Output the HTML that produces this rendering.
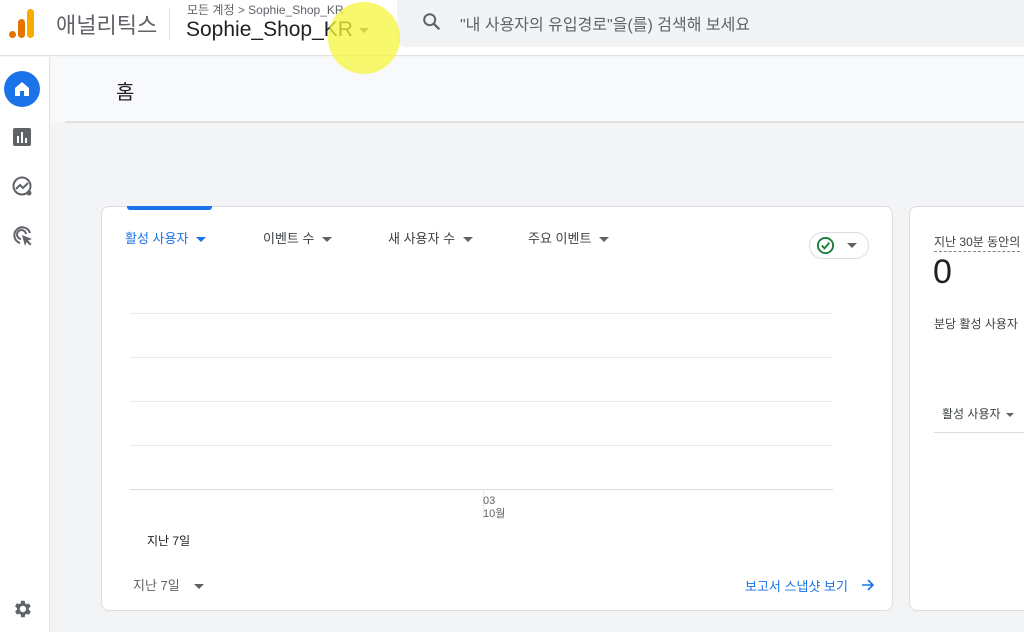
<!DOCTYPE html>
<html><head><meta charset="utf-8"><style>
*{margin:0;padding:0;box-sizing:border-box}
body{width:1024px;height:632px;overflow:hidden;background:#f3f4f6;font-family:"Liberation Sans","Noto Sans CJK KR",sans-serif;position:relative;color:#3c4043}
.a{position:absolute}
.caret{display:inline-block;width:0;height:0;border-left:5px solid transparent;border-right:5px solid transparent;border-top:5px solid #5f6368;vertical-align:middle;margin-left:8px}
</style></head><body>
<div class="a" style="left:0;top:0;width:1024px;height:56px;background:#fff;border-bottom:1px solid #e3e3e3"></div>
<svg class="a" style="left:8px;top:8px" width="30" height="32" viewBox="0 0 30 32">
<rect x="19" y="1" width="7" height="29" rx="3.5" fill="#f9ab00"/>
<rect x="10" y="11" width="7" height="19" rx="3.5" fill="#e37400"/>
<circle cx="4.5" cy="26.5" r="3.5" fill="#e37400"/></svg>
<div class="a" style="left:56px;top:8px;font-size:22px;color:#5f6368">애널리틱스</div>
<div class="a" style="left:169px;top:8px;width:1px;height:32px;background:#e0e0e0"></div>
<div class="a" style="left:187px;top:1px;font-size:12px;color:#5f6368">모든 계정 &gt; Sophie_Shop_KR</div>
<div class="a" style="left:186px;top:18px;font-size:21px;color:#202124">Sophie_Shop_KR<span class="caret" style="margin-left:6px"></span></div>
<div class="a" style="left:397px;top:0;width:627px;height:47px;background:#f1f3f4;border-radius:0 0 0 8px"></div>
<svg class="a" style="left:421px;top:11px" width="22" height="22" viewBox="0 0 24 24"><circle cx="9.5" cy="9.5" r="6" stroke="#5f6368" stroke-width="2.2" fill="none"/><path d="M14 14l6 6" stroke="#5f6368" stroke-width="2.5"/></svg>
<div class="a" style="left:460px;top:11px;font-size:16px;color:#5f6368">"내 사용자의 유입경로"을(를) 검색해 보세요</div>
<div class="a" style="left:0;top:57px;width:50px;height:575px;background:#fff;border-right:1px solid #e3e3e3"></div>
<div class="a" style="left:4px;top:71px;width:36px;height:36px;border-radius:50%;background:#1a73e8"></div>
<svg class="a" style="left:12px;top:79px" width="20" height="20" viewBox="0 0 20 20"><path d="M3 9L10 3l7 6v8h-5v-5H8v5H3z" fill="#fff"/></svg>
<svg class="a" style="left:12px;top:127px" width="20" height="20" viewBox="0 0 20 20"><rect x="1" y="1" width="18" height="18" rx="2" fill="#5f6368"/><rect x="5" y="9" width="2" height="7" fill="#fff"/><rect x="9" y="5" width="2" height="11" fill="#fff"/><rect x="13" y="11" width="2" height="5" fill="#fff"/></svg>
<svg class="a" style="left:11px;top:175px" width="22" height="22" viewBox="0 0 22 22"><circle cx="11" cy="11" r="8.5" stroke="#5f6368" stroke-width="2" fill="none"/><path d="M5 14l4-4 3 3 5-5" stroke="#5f6368" stroke-width="2" fill="none"/><circle cx="18" cy="18" r="2.5" fill="#5f6368"/></svg>
<svg class="a" style="left:11px;top:224px" width="24" height="24" viewBox="0 0 24 24"><path d="M19 9A8 8 0 1 0 9 19" stroke="#5f6368" stroke-width="2" fill="none"/><path d="M15 10a4.5 4.5 0 1 0-5 5" stroke="#5f6368" stroke-width="2" fill="none"/><path d="M11 11l10 4-4 1.5 3.5 3.5-1.5 1.5-3.5-3.5-1.5 4z" fill="#5f6368"/></svg>
<svg class="a" style="left:11px;top:598px" width="22" height="22" viewBox="0 0 24 24"><path fill="#5f6368" d="M19.4 13a7.5 7.5 0 0 0 0-2l2.1-1.6-2-3.5-2.5 1a7 7 0 0 0-1.7-1L15 3h-4l-.4 2.7a7 7 0 0 0-1.700 1l-2.5-1-2 3.5L6.6 11a7.5 7.5 0 0 0 0 2l-2.1 1.6 2 3.5 2.5-1a7 7 0 0 0 1.7 1L11 21h4l.4-2.7a7 7 0 0 0 1.7-1l2.5 1 2-3.5zM13 15.5a3.5 3.5 0 1 1 0-7 3.5 3.5 0 0 1 0 7z"/></svg>
<div class="a" style="left:51px;top:57px;width:973px;height:65px;background:#f8f9fa"></div>
<div class="a" style="left:65px;top:121px;width:959px;height:2px;background:#e0e0e0"></div>
<div class="a" style="left:116px;top:76px;font-size:20px;color:#202124">홈</div>
<div class="a" style="left:328px;top:2px;width:72px;height:72px;border-radius:50%;background:rgba(245,245,60,0.75)"></div>
<div class="a" style="left:101px;top:206px;width:792px;height:405px;background:#fff;border:1px solid #dadce0;border-radius:8px"></div>
<div class="a" style="left:127px;top:206px;width:85px;height:4px;background:#1a73e8;border-radius:0 0 3px 3px"></div>
<div class="a" style="left:125px;top:228px;font-size:13px;color:#1a73e8">활성 사용자<span class="caret" style="border-top-color:#1a73e8"></span></div>
<div class="a" style="left:263px;top:228px;font-size:13px">이벤트 수<span class="caret"></span></div>
<div class="a" style="left:388px;top:228px;font-size:13px">새 사용자 수<span class="caret"></span></div>
<div class="a" style="left:528px;top:228px;font-size:13px">주요 이벤트<span class="caret"></span></div>
<div class="a" style="left:809px;top:232px;width:60px;height:27px;border:1px solid #dadce0;border-radius:14px"></div>
<svg class="a" style="left:816px;top:236px" width="19" height="19" viewBox="0 0 20 20"><circle cx="10" cy="10" r="8" stroke="#188038" stroke-width="2" fill="none"/><path d="M6 10l3 3 5-6" stroke="#188038" stroke-width="2" fill="none"/></svg>
<span class="caret a" style="left:847px;top:243px;margin:0"></span>
<div class="a" style="left:130px;top:313px;width:703px;height:1px;background:#e8eaed"></div>
<div class="a" style="left:130px;top:357px;width:703px;height:1px;background:#e8eaed"></div>
<div class="a" style="left:130px;top:401px;width:703px;height:1px;background:#e8eaed"></div>
<div class="a" style="left:130px;top:445px;width:703px;height:1px;background:#e8eaed"></div>
<div class="a" style="left:130px;top:489px;width:703px;height:1px;background:#dadce0"></div>
<div class="a" style="left:483px;top:489px;width:1px;height:30px;background:#e8eaed"></div>
<div class="a" style="left:483px;top:495px;font-size:11px;line-height:13px;color:#5f6368">03<br>10월</div>
<div class="a" style="left:147px;top:532px;font-size:12px;color:#202124">지난 7일</div>
<div class="a" style="left:133px;top:575px;font-size:13px;color:#5f6368">지난 7일<span class="caret" style="margin-left:14px"></span></div>
<div class="a" style="left:745px;top:576px;font-size:13px;color:#1a73e8">보고서 스냅샷 보기</div>
<svg class="a" style="left:861px;top:578px" width="14" height="14" viewBox="0 0 14 14"><path d="M1 7h11M7 2l5 5-5 5" stroke="#1a73e8" stroke-width="1.6" fill="none"/></svg>
<div class="a" style="left:909px;top:206px;width:130px;height:405px;background:#fff;border:1px solid #dadce0;border-radius:8px"></div>
<div class="a" style="left:934px;top:233px;font-size:12px;color:#3c4043;border-bottom:1px dashed #80868b;padding-bottom:1px;white-space:nowrap">지난 30분 동안의</div>
<div class="a" style="left:933px;top:253px;font-size:34px;color:#202124">0</div>
<div class="a" style="left:934px;top:315px;font-size:12px;white-space:nowrap">분당 활성 사용자</div>
<div class="a" style="left:942px;top:405px;font-size:12px;white-space:nowrap">활성 사용자<span class="caret" style="margin-left:5px;border-width:4px 4px 0"></span></div>
<div class="a" style="left:934px;top:432px;width:90px;height:1px;background:#dadce0"></div>
</body></html>
